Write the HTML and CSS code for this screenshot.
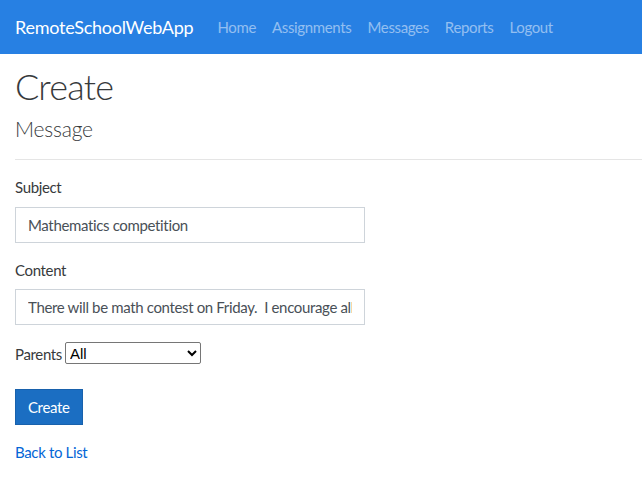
FILE: index.html
```html
<!DOCTYPE html>
<html>
<head>
<meta charset="utf-8">
<link rel="stylesheet" href="styles.css">
</head>
<body>
<header class="navbar">
  <a class="brand" href="#">RemoteSchoolWebApp</a>
  <nav class="nav">
    <a class="nav-link" href="#">Home</a>
    <a class="nav-link" href="#">Assignments</a>
    <a class="nav-link" href="#">Messages</a>
    <a class="nav-link" href="#">Reports</a>
    <a class="nav-link" href="#">Logout</a>
  </nav>
</header>
<main class="container">
  <h1 class="title">Create</h1>
  <h4 class="subtitle">Message</h4>
  <hr class="rule">
  <form class="form">
    <div class="group">
      <label class="label">Subject</label>
      <input class="input" type="text" value="Mathematics competition">
    </div>
    <div class="group content">
      <label class="label">Content</label>
      <input class="input" type="text" value="There will be math contest on Friday.  I encourage all students to participate.">
    </div>
    <div class="group parents">
      <label class="label inline">Parents</label>
      <select class="select"><option>All</option></select>
    </div>
    <div class="group">
      <button class="btn" type="button">Create</button>
    </div>
  </form>
  <div class="back"><a class="link" href="#">Back to List</a></div>
</main>
</body>
</html>
```
FILE: styles.css
```css
html, body { margin: 0; padding: 0; }
body {
  font-family: "Lato", "Open Sans", sans-serif;
  font-size: 15px;
  line-height: 1.5;
  letter-spacing: -0.35px;
  color: #373a3c;
  background: #fff;
  overflow: hidden;
}
.navbar {
  height: 54px;
  background: #2780e3;
  display: flex;
  align-items: center;
  padding: 0 15px;
}
.brand {
  color: #fff;
  text-decoration: none;
  font-size: 18px;
  letter-spacing: -0.25px;
  margin-right: 16px;
}
.nav { display: flex; }
.nav-link {
  color: rgba(255,255,255,0.5);
  text-decoration: none;
  padding: 0 8px;
  font-size: 15px;
}
.container { padding: 0 15px; }
.title {
  font-size: 36px;
  font-weight: 300;
  line-height: 1.2;
  letter-spacing: -0.8px;
  margin: 11px 0 0;
}
.subtitle {
  font-size: 21px;
  font-weight: 300;
  line-height: 1.2;
  letter-spacing: -0.2px;
  margin: 8px 0 0;
}
.rule {
  border: 0;
  border-top: 1px solid #e5e5e5;
  margin: 18px -15px 16px 0;
}
.group { margin-bottom: 16px; }
.group.content { margin-bottom: 15px; }
.label { display: block; margin-bottom: 8px; }
.parents {
  display: flex;
  align-items: center;
  gap: 3px;
  height: 26px;
  margin-bottom: 23px;
}
.label.inline { display: inline; margin: 0; padding-top: 1px; }
.input {
  display: block;
  box-sizing: border-box;
  width: 350px;
  height: 36px;
  padding: 6px 12px;
  font: inherit;
  letter-spacing: inherit;
  color: #495057;
  border: 1px solid #ced4da;
  border-radius: 0;
  background: #fff;
}
.select {
  width: 136px;
  height: 22px;
  font-family: "Liberation Sans", sans-serif;
  font-size: 15px;
  letter-spacing: 0;
  border: 1px solid #767676;
  border-radius: 2px;
  background: #fff;
  color: #000;
}
.btn {
  font: inherit;
  letter-spacing: inherit;
  color: #fff;
  background: #1b6ec2;
  border: 1px solid #1861ac;
  border-radius: 0;
  padding: 6px 12px;
  height: 36px;
}
.link { color: #0366d6; text-decoration: none; }
```
